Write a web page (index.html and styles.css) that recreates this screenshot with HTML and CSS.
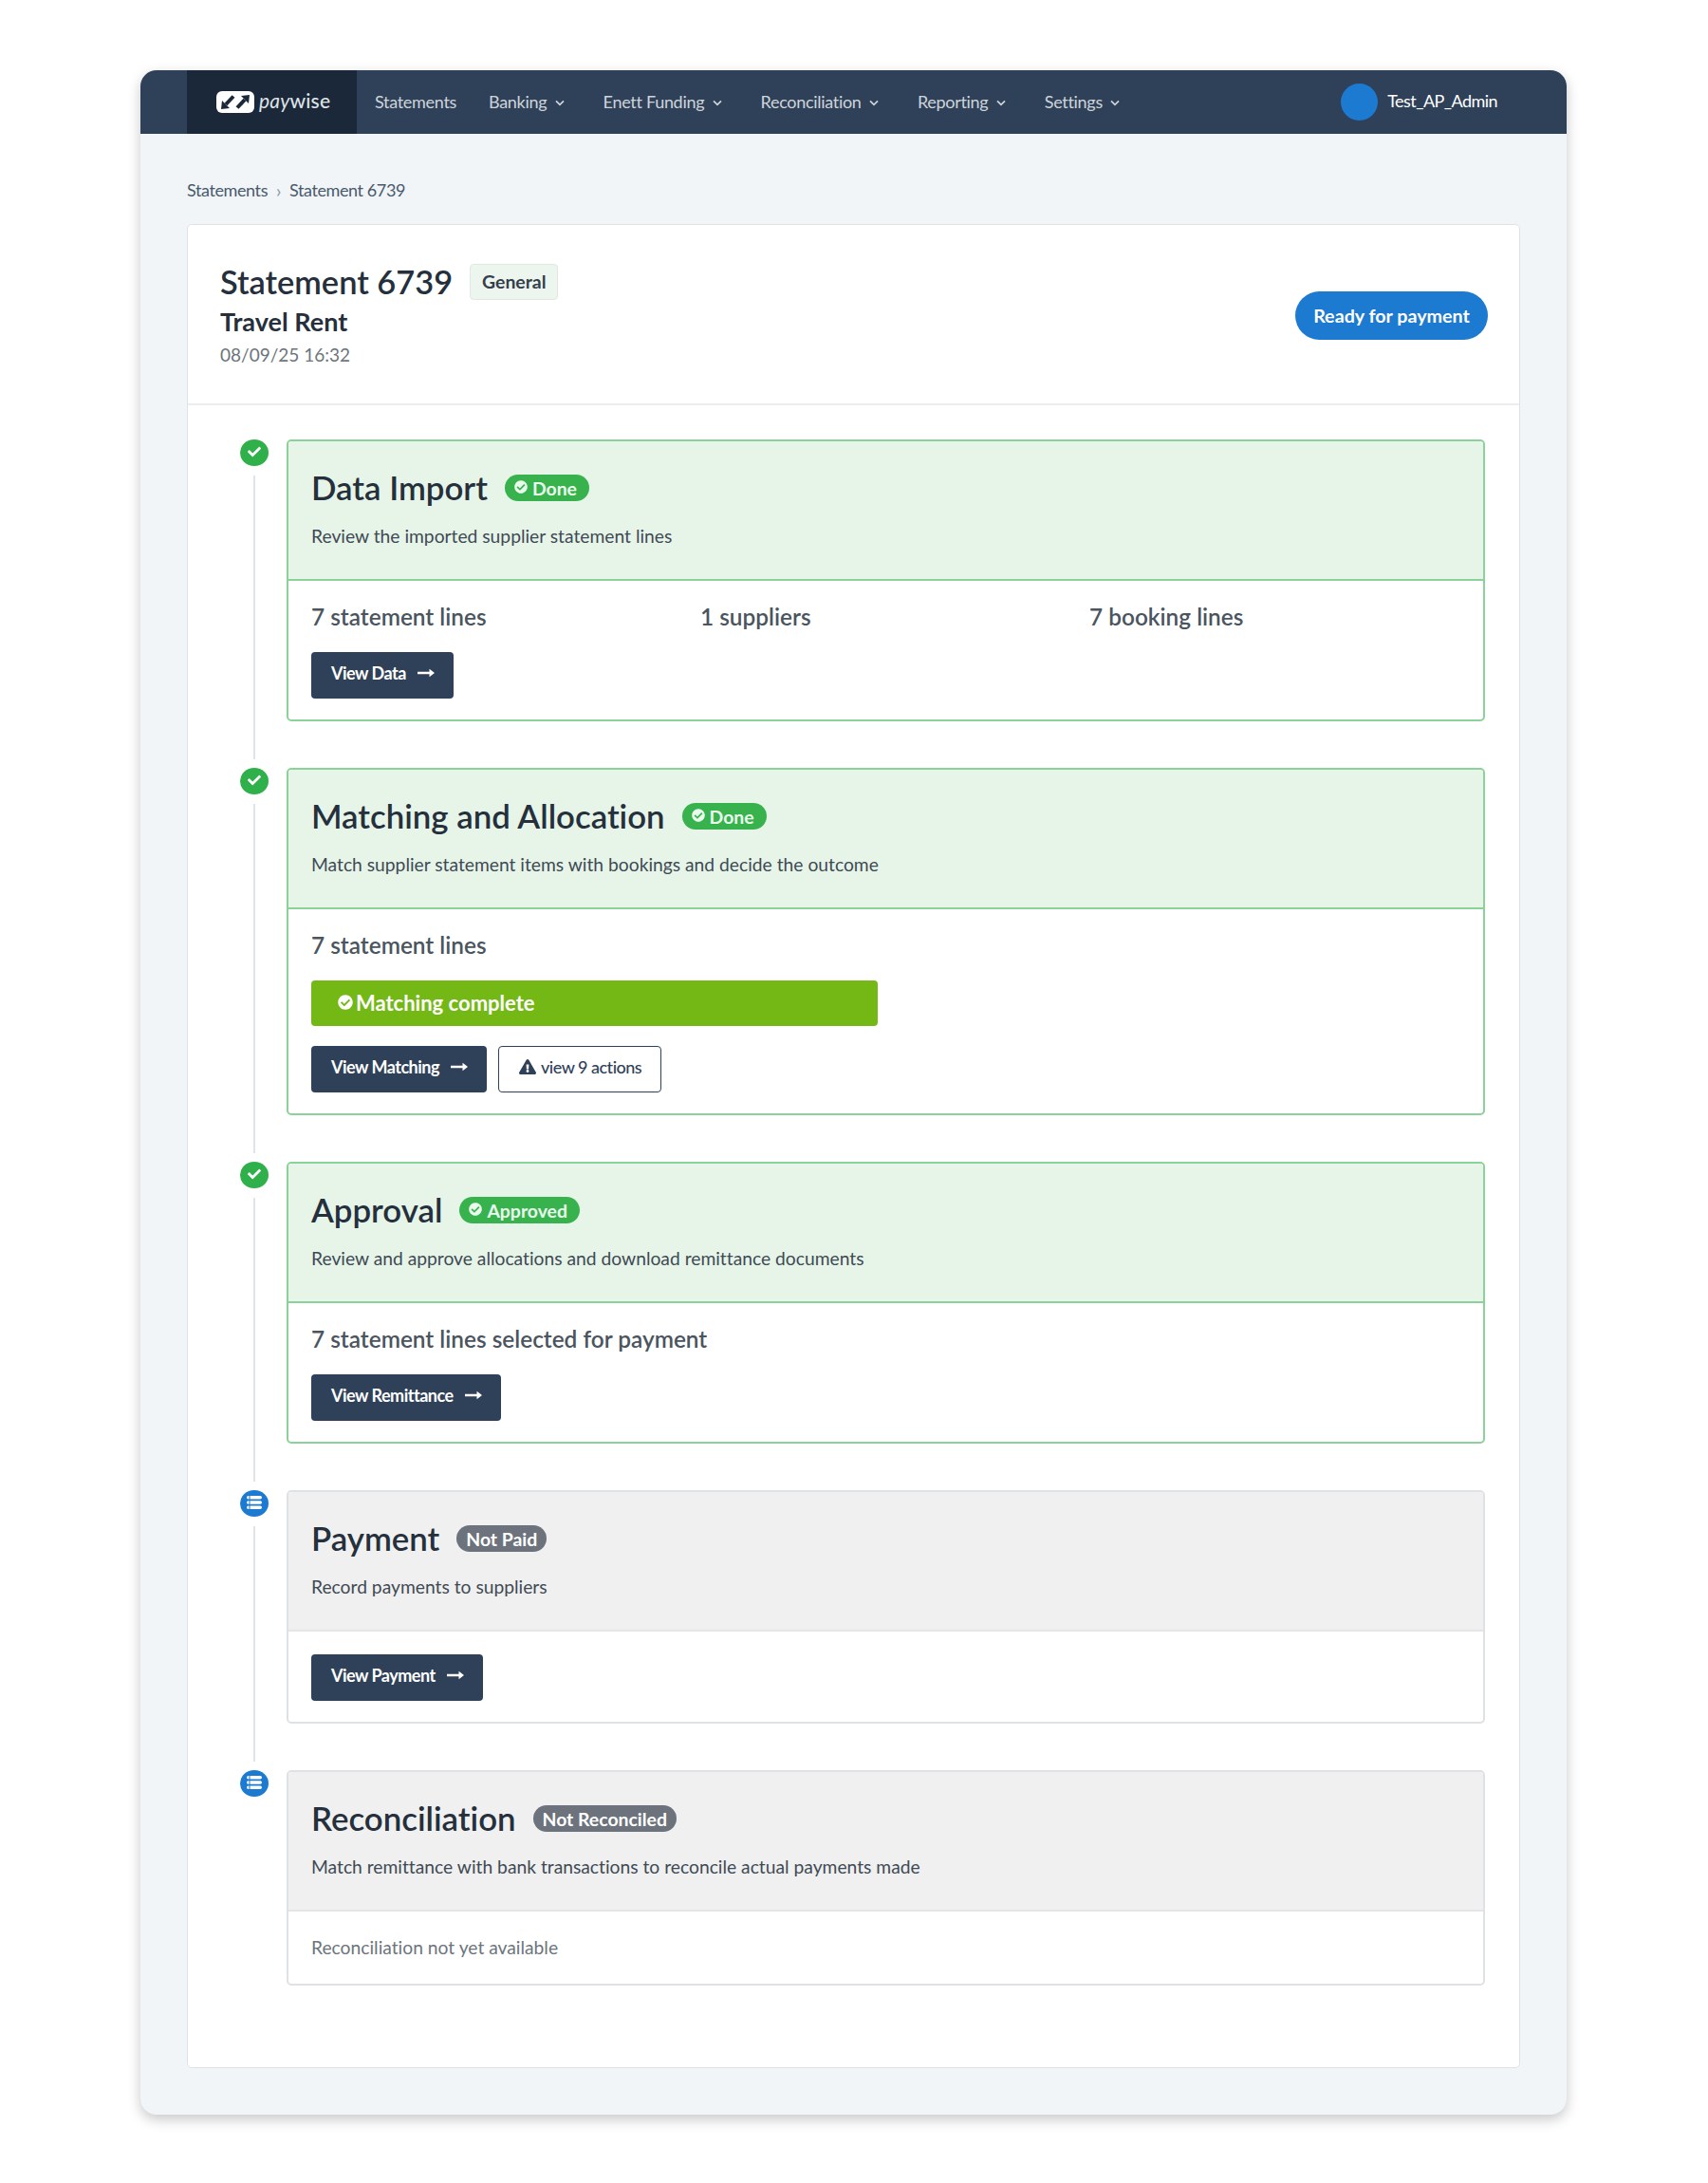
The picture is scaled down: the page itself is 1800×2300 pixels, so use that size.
FILE: index.html
```html
<!DOCTYPE html>
<html lang="en">
<head>
<meta charset="utf-8">
<title>Statement 6739</title>
<link rel="stylesheet" href="styles.css">
</head>
<body>
<svg class="defs" width="0" height="0" aria-hidden="true">
  <symbol id="i-check-circle" viewBox="0 0 512 512"><path fill="currentColor" d="M504 256c0 136.967-111.033 248-248 248S8 392.967 8 256 119.033 8 256 8s248 111.033 248 248zM227.314 387.314l184-184c6.248-6.248 6.248-16.379 0-22.627l-22.627-22.627c-6.248-6.249-16.379-6.249-22.628 0L216 308.118l-70.059-70.059c-6.248-6.248-16.379-6.248-22.628 0l-22.627 22.627c-6.248 6.248-6.248 16.379 0 22.627l104 104c6.249 6.249 16.379 6.249 22.628.001z"/></symbol>
  <symbol id="i-check" viewBox="0 0 512 512"><path fill="currentColor" d="M173.898 439.404l-166.4-166.4c-9.997-9.997-9.997-26.206 0-36.204l36.203-36.204c9.997-9.998 26.207-9.998 36.204 0L192 312.69 432.095 72.596c9.997-9.997 26.207-9.997 36.204 0l36.203 36.204c9.997 9.997 9.997 26.206 0 36.204l-294.4 294.401c-9.998 9.997-26.207 9.997-36.204-.001z"/></symbol>
  <symbol id="i-warn" viewBox="0 0 576 512"><path fill="currentColor" d="M569.517 440.013C587.975 472.007 564.806 512 527.94 512H48.054c-36.937 0-59.999-40.055-41.577-71.987L246.423 23.985c18.467-32.009 64.72-31.951 83.154 0l239.94 416.028zM288 354c-25.405 0-46 20.595-46 46s20.595 46 46 46 46-20.595 46-46-20.595-46-46-46zm-43.673-165.346l7.418 136c.347 6.364 5.609 11.346 11.982 11.346h48.546c6.373 0 11.635-4.982 11.982-11.346l7.418-136c.375-6.874-5.098-12.654-11.982-12.654h-63.383c-6.884 0-12.356 5.78-11.981 12.654z"/></symbol>
  <symbol id="i-arrow" viewBox="0 0 18 12"><path fill="currentColor" d="M0 4.800h12.500V1.800L18 6l-5.500 4.200V7.200H0z"/></symbol>
  <symbol id="i-chev" viewBox="0 0 10 7"><path fill="none" stroke="currentColor" stroke-width="1.700" d="M1 1.300l4 4 4-4"/></symbol>
  <symbol id="i-list" viewBox="0 0 16 14"><path fill="currentColor" d="M0 1.700A1.700 1.700 0 0 1 1.700 0h.8v3.400h-.8A1.700 1.700 0 0 1 0 1.700zM3.500 0h10.800a1.700 1.700 0 0 1 0 3.400H3.500zM0 7a1.700 1.700 0 0 1 1.700-1.700h.8v3.400h-.8A1.700 1.700 0 0 1 0 7zM3.500 5.300h10.800a1.700 1.700 0 0 1 0 3.400H3.500zM0 12.300a1.700 1.700 0 0 1 1.700-1.700h.8V14h-.8A1.700 1.700 0 0 1 0 12.300zM3.500 10.600h10.800a1.700 1.700 0 0 1 0 3.400H3.500z"/></symbol>
</svg>

<div class="app">
  <header class="topbar">
    <a class="brand">
      <svg class="brand-mark" viewBox="0 0 40 23" aria-hidden="true">
        <rect width="40" height="23" rx="6" fill="#fff"/>
        <path fill="none" stroke="#1b2839" stroke-width="4" d="M18 5.500L10 14M22 17.500L30 9"/>
        <path fill="#1b2839" d="M5 19l1-9 8 8zM35 4l-1 9-8-8z"/>
      </svg>
      <span class="brand-name"><i>pay</i>wise</span>
    </a>
    <nav class="nav">
      <a class="nav-item">Statements</a>
      <a class="nav-item">Banking <svg class="chev"><use href="#i-chev"/></svg></a>
      <a class="nav-item">Enett Funding <svg class="chev"><use href="#i-chev"/></svg></a>
      <a class="nav-item">Reconciliation <svg class="chev"><use href="#i-chev"/></svg></a>
      <a class="nav-item">Reporting <svg class="chev"><use href="#i-chev"/></svg></a>
      <a class="nav-item">Settings <svg class="chev"><use href="#i-chev"/></svg></a>
    </nav>
    <div class="user"><span class="avatar"></span><span>Test_AP_Admin</span></div>
  </header>

  <main class="main">
    <div class="crumbs"><a>Statements</a><span class="sep">›</span><a>Statement 6739</a></div>

    <section class="panel">
      <div class="panel-head">
        <div>
          <div class="title-row"><h1>Statement 6739</h1><span class="tag">General</span></div>
          <h2>Travel Rent</h2>
          <div class="date">08/09/25 16:32</div>
        </div>
        <a class="ready">Ready for payment</a>
      </div>

      <div class="steps">
        <div class="step">
          <div class="rail"><span class="dot dot-done"><svg class="dot-check"><use href="#i-check"/></svg></span><span class="line"></span></div>
          <article class="box box-done">
            <div class="box-head">
              <div class="box-title"><h3>Data Import</h3><span class="pill pill-green"><svg class="pill-icon"><use href="#i-check-circle"/></svg>Done</span></div>
              <p>Review the imported supplier statement lines</p>
            </div>
            <div class="box-body">
              <div class="stats"><span>7 statement lines</span><span>1 suppliers</span><span>7 booking lines</span></div>
              <div class="actions"><a class="btn">View Data<svg class="arrow"><use href="#i-arrow"/></svg></a></div>
            </div>
          </article>
        </div>

        <div class="step">
          <div class="rail"><span class="dot dot-done"><svg class="dot-check"><use href="#i-check"/></svg></span><span class="line"></span></div>
          <article class="box box-done">
            <div class="box-head">
              <div class="box-title"><h3>Matching and Allocation</h3><span class="pill pill-green"><svg class="pill-icon"><use href="#i-check-circle"/></svg>Done</span></div>
              <p>Match supplier statement items with bookings and decide the outcome</p>
            </div>
            <div class="box-body">
              <div class="stats"><span>7 statement lines</span></div>
              <div class="progress"><svg class="progress-icon"><use href="#i-check-circle"/></svg>Matching complete</div>
              <div class="actions">
                <a class="btn">View Matching<svg class="arrow"><use href="#i-arrow"/></svg></a>
                <a class="btn btn-outline"><svg class="warn"><use href="#i-warn"/></svg>view 9 actions</a>
              </div>
            </div>
          </article>
        </div>

        <div class="step">
          <div class="rail"><span class="dot dot-done"><svg class="dot-check"><use href="#i-check"/></svg></span><span class="line"></span></div>
          <article class="box box-done">
            <div class="box-head">
              <div class="box-title"><h3>Approval</h3><span class="pill pill-green"><svg class="pill-icon"><use href="#i-check-circle"/></svg>Approved</span></div>
              <p>Review and approve allocations and download remittance documents</p>
            </div>
            <div class="box-body">
              <div class="stats"><span class="wide">7 statement lines selected for payment</span></div>
              <div class="actions"><a class="btn">View Remittance<svg class="arrow"><use href="#i-arrow"/></svg></a></div>
            </div>
          </article>
        </div>

        <div class="step">
          <div class="rail"><span class="dot dot-todo"><svg class="dot-list"><use href="#i-list"/></svg></span><span class="line"></span></div>
          <article class="box">
            <div class="box-head">
              <div class="box-title"><h3>Payment</h3><span class="pill pill-grey">Not Paid</span></div>
              <p>Record payments to suppliers</p>
            </div>
            <div class="box-body box-body-tight">
              <div class="actions"><a class="btn">View Payment<svg class="arrow"><use href="#i-arrow"/></svg></a></div>
            </div>
          </article>
        </div>

        <div class="step step-last">
          <div class="rail"><span class="dot dot-todo"><svg class="dot-list"><use href="#i-list"/></svg></span></div>
          <article class="box">
            <div class="box-head">
              <div class="box-title"><h3>Reconciliation</h3><span class="pill pill-grey">Not Reconciled</span></div>
              <p>Match remittance with bank transactions to reconcile actual payments made</p>
            </div>
            <div class="box-body box-body-note">Reconciliation not yet available</div>
          </article>
        </div>
      </div>
    </section>
  </main>
</div>
</body>
</html>
```

FILE: styles.css
```css
* { box-sizing: border-box; }

html, body { margin: 0; padding: 0; }

body {
  background: #fff;
  font-family: Lato, "Open Sans", sans-serif;
  font-variant-ligatures: none;
  color: #212529;
  padding: 74px 149px 73px 148px;
}

.defs { position: absolute; }

h1, h2, h3, p { margin: 0; }

.app {
  background: #f1f5f8;
  border-radius: 17px;
  box-shadow: 0 5px 14px rgba(0, 0, 0, .22);
  overflow: hidden;
}

/* top bar */
.topbar {
  height: 67px;
  display: flex;
  align-items: center;
  background: #2f4159;
  padding-left: 49px;
  color: #ced4da;
  font-size: 18px;
  letter-spacing: -.3px;
}

.brand {
  width: 179px;
  align-self: stretch;
  background: #1b2839;
  display: flex;
  align-items: center;
  padding-left: 31px;
  gap: 5px;
}

.brand-mark { width: 40px; height: 23px; flex: none; }

.brand-name {
  color: #dfe3e8;
  font-size: 21px;
  font-weight: 500;
  letter-spacing: .2px;
  margin-top: -5px;
}

.brand-name i { font-weight: 400; }

.nav { display: flex; align-items: center; padding-left: 19px; flex: 1; margin-top: -2px; }

.nav-item {
  display: flex;
  align-items: center;
  gap: 4px;
  margin-right: 34px;
  white-space: pre;
}

.chev { width: 10px; height: 7px; margin-top: 3px; margin-right: 7px; }

.user {
  display: flex;
  align-items: center;
  gap: 10px;
  color: #fff;
  padding-right: 73px;
  letter-spacing: -.55px;
}

.user span:last-child { margin-top: -3px; }

.avatar { width: 39px; height: 39px; border-radius: 50%; background: #1c7ad0; }

/* page */
.main { padding: 49px; }

.crumbs {
  display: flex;
  align-items: center;
  height: 20px;
  margin-bottom: 26px;
  font-size: 18px;
  letter-spacing: -.4px;
  color: #495a6c;
}

.sep { margin: 0 9px; color: #8795a3; font-size: 19px; }

.panel {
  background: #fff;
  border: 1px solid #dee2e6;
  border-radius: 5px;
}

.panel-head {
  height: 190px;
  display: flex;
  align-items: center;
  justify-content: space-between;
  padding: 0 33px 0 34px;
  border-bottom: 2px solid #ebedef;
}

.title-row { display: flex; align-items: center; gap: 18px; }

h1 { font-size: 34.400px; font-weight: 600; line-height: 40px; color: #25303c; }

.tag {
  background: #edf5ef;
  border: 1px solid #dee9e1;
  border-radius: 4px;
  padding: 0 12px;
  font-size: 19.400px;
  font-weight: 700;
  line-height: 36px;
  color: #343f4b;
}

h2 { font-size: 27px; font-weight: 700; line-height: 36px; margin-top: 4px; color: #25303c; }

.date { font-size: 19px; line-height: 24px; margin-top: 5px; color: #6c757d; }

.ready {
  width: 203px;
  height: 51px;
  border-radius: 26px;
  background: #1c7ad0;
  color: #fff;
  font-size: 19.700px;
  font-weight: 700;
  display: flex;
  align-items: center;
  justify-content: center;
  margin-top: 2px;
}

/* timeline */
.steps { padding: 36px 36px 86px 55px; }

.step { display: flex; }

.rail {
  width: 49px;
  flex: none;
  display: flex;
  flex-direction: column;
}

.dot {
  width: 30px;
  height: 28px;
  border-radius: 50%;
  color: #fff;
  display: flex;
  align-items: center;
  justify-content: center;
  flex: none;
}

.dot-done { background: #2fb04a; }
.dot-todo { background: #1c7ad0; }
.dot-check { width: 14px; height: 14px; margin-top: -3px; }
.dot-list { width: 16px; height: 14px; margin-top: -3px; }

.line {
  flex: 1;
  width: 2px;
  background: #dfe4e9;
  margin: 10px 0 9px 14px;
}

.box {
  flex: 1;
  border: 2px solid #dfe2e5;
  border-radius: 5px;
  margin-bottom: 49px;
  overflow: hidden;
}

.step-last .box { margin-bottom: 0; }

.box-head {
  height: 147px;
  padding: 0 24px;
  background: #f0f0f0;
  border-bottom: 2px solid #e3e5e7;
  display: flex;
  flex-direction: column;
}

.box-title {
  display: flex;
  align-items: center;
  gap: 18px;
  height: 40px;
  margin-top: 29px;
}

.box-head p { margin-top: 19px; font-size: 19.250px; line-height: 24px; color: #3f4a55; }

h3 { font-size: 34.800px; font-weight: 600; color: #25303c; line-height: 40px; white-space: nowrap; }

.box-done { border-color: #8ad29a; }
.box-done .box-head { background: #e7f5e9; border-bottom-color: #8ad29a; }

.pill {
  display: inline-flex;
  align-items: center;
  gap: 5px;
  height: 28px;
  padding: 0 13px 0 10px;
  border-radius: 14px;
  font-size: 19.400px;
  font-weight: 700;
  color: #fff;
}

.pill-green { background: #37b24d; color: #eafbee; }
.pill-grey { background: #6c737d; padding: 0 10px; }
.pill-icon { width: 14px; height: 14px; margin-top: -3px; }

.box-body { padding: 24px 24px 22px; }

.stats {
  display: grid;
  grid-template-columns: repeat(3, 410px);
  font-size: 24.400px;
  font-weight: 600;
  line-height: 28px;
  color: #4a5560;
}

.stats .wide { grid-column: 1 / -1; }

.actions { display: flex; gap: 12px; margin-top: 23px; }

.btn {
  height: 49px;
  display: inline-flex;
  align-items: center;
  gap: 12px;
  padding: 0 20px 5px 21px;
  background: #2f4159;
  border-radius: 4px;
  color: #fff;
  font-size: 18px;
  font-weight: 700;
  letter-spacing: -.5px;
}

.arrow { width: 18px; height: 12px; flex: none; }

.btn-outline {
  background: #fff;
  border: 1.500px solid #2f4159;
  color: #2f4159;
  font-weight: 500;
  gap: 5px;
}

.warn { width: 18px; height: 16px; }

.progress {
  width: 597px;
  height: 48px;
  margin-top: 23px;
  background: #74b816;
  border-radius: 4px;
  color: #fff;
  font-size: 22px;
  font-weight: 700;
  display: flex;
  align-items: center;
  padding: 0 0 2px 28px;
  gap: 3px;
}

.progress-icon { width: 16px; height: 16px; }

.progress + .actions { margin-top: 21px; }

.box-body-tight .actions { margin-top: 0; }

.box-body-note {
  padding: 26px 24px;
  font-size: 19.250px;
  line-height: 24px;
  color: #6c757d;
}
```
